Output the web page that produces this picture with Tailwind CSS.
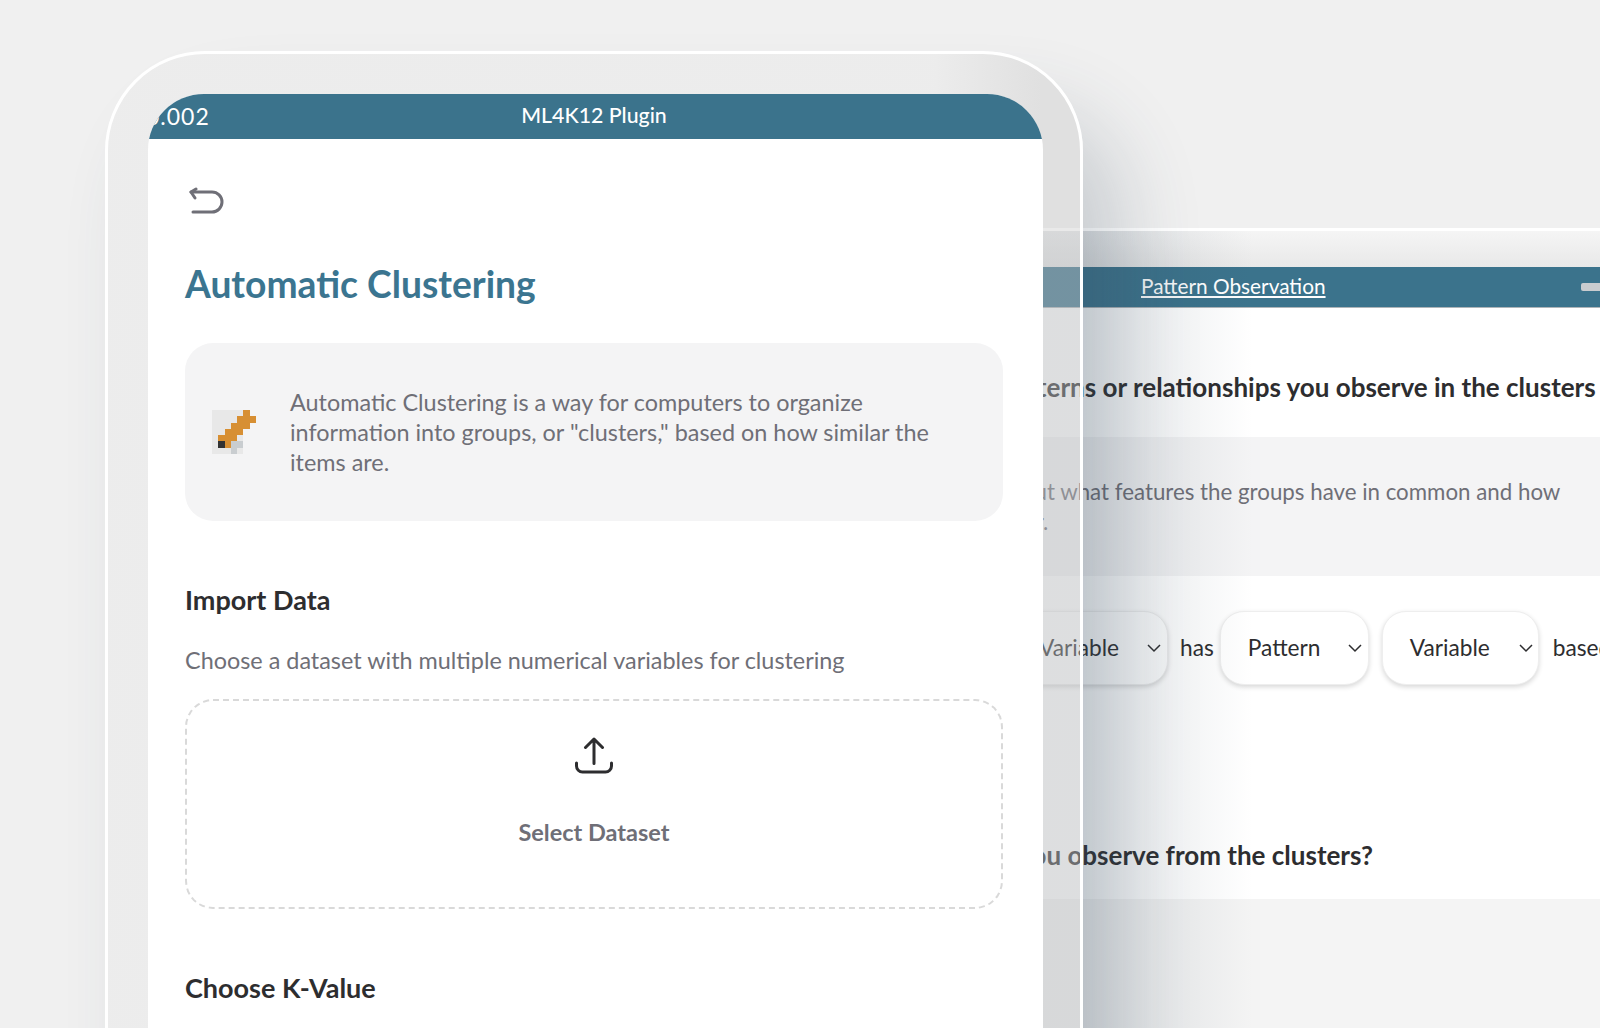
<!DOCTYPE html>
<html>

<head>
  <meta charset="UTF-8">
  <meta name="viewport" content="width=device-width, initial-scale=1.0">
  <script src="https://cdn.jsdelivr.net/npm/@tailwindcss/browser@4"></script>
</head>

<body>
  <div class="relative w-[1600px] h-[1028px] overflow-hidden bg-[#f0f0f0] font-['Lato',sans-serif]">

    <!-- window behind the phone -->
    <div class="absolute left-[800px] top-[228px] w-[860px] h-[800px] border-t-[3px] border-white bg-[linear-gradient(#f5f5f5,#e8e8e8_37px)] pt-[36px]">
      <div class="flex h-[41px] items-center border-b border-[#aeb4b8] bg-[#3b738c] pb-[3px] text-white">
        <span class="ml-[341px] text-[20.8px] underline underline-offset-2">Pattern Observation</span>
        <span class="ml-[255px] mt-[3px] h-[8px] w-[40px] rounded-[2px] bg-[#c9cccf]"></span>
      </div>
      <div class="h-[591px] bg-white">
        <p class="whitespace-nowrap pl-[45px] pt-[64px] text-[26px] font-bold leading-[30px] text-[#2d2d2f]">Describe any patterns or relationships you observe in the clusters</p>
        <div class="mt-[35px] h-[139px] rounded-l-[24px] bg-[#f4f4f5] pl-[138px] pt-[40px] text-[22.3px] leading-[30px] text-[#6f6f77]">
          <p class="whitespace-nowrap">Think about what features the groups have in common and how</p>
          <p class="ml-[5px]">they differ.</p>
        </div>
        <div class="ml-[140px] mt-[35px] flex items-center text-[22.7px] text-[#2d2d2f]">
          <div class="flex h-[74px] w-[228px] items-center justify-between rounded-[24px] border border-[#eeeeee] bg-white pl-[98px] pr-[5px] shadow-[0_2px_5px_rgba(0,0,0,0.16)]">
            <span>Variable</span>
            <svg class="h-4 w-4" viewBox="0 0 16 16" fill="none" stroke="currentColor" stroke-width="1.5"><path d="M2 5l6 6 6-6" /></svg>
          </div>
          <span class="ml-[12px]">has</span>
          <div class="ml-[6px] flex h-[74px] w-[149px] items-center justify-between rounded-[24px] border border-[#eeeeee] bg-white pl-[27px] pr-[5px] shadow-[0_2px_5px_rgba(0,0,0,0.16)]">
            <span>Pattern</span>
            <svg class="h-4 w-4" viewBox="0 0 16 16" fill="none" stroke="currentColor" stroke-width="1.5"><path d="M2 5l6 6 6-6" /></svg>
          </div>
          <div class="ml-[13px] flex h-[74px] w-[157px] items-center justify-between rounded-[24px] border border-[#eeeeee] bg-white pl-[27px] pr-[4px] shadow-[0_2px_5px_rgba(0,0,0,0.16)]">
            <span>Variable</span>
            <svg class="h-4 w-4" viewBox="0 0 16 16" fill="none" stroke="currentColor" stroke-width="1.5"><path d="M2 5l6 6 6-6" /></svg>
          </div>
          <span class="ml-[14px]">based</span>
        </div>
        <p class="whitespace-nowrap pl-[112px] pt-[155px] text-[26px] font-bold leading-[30px] text-[#2d2d2f]">What do you observe from the clusters?</p>
      </div>
      <div class="h-[130px] bg-[#f4f4f4]"></div>
      <!-- soft shade the phone throws on the window -->
      <div class="absolute inset-y-0 left-[243px] w-[40px] bg-[#3c5060]/10"></div>
      <div class="absolute inset-y-0 left-[283px] w-[170px] bg-linear-to-r from-[#3c5060]/15 to-transparent"></div>
    </div>

    <!-- phone -->
    <div class="absolute left-[105px] top-[51px] h-[1100px] w-[978px] rounded-[100px] border-[3px] border-white bg-[linear-gradient(90deg,rgba(215,215,215,0.15)_85%,rgba(200,200,200,0.4)_96%)] pl-[40px] pr-[37px] pt-[40px] shadow-[40px_60px_80px_rgba(50,70,90,0.2)]">
      <div class="h-full overflow-hidden rounded-t-[56px] bg-white">
        <div class="relative flex h-[45px] items-center justify-center bg-[#3b738c] pb-[2px] pr-[3px] text-[21.3px] text-white">
          <span class="absolute left-[-2px] top-[5px] text-[23px] tracking-[1px]">0.002</span>
          <span class="font-medium">ML4K12 Plugin</span>
        </div>
        <div class="pl-[37px] pr-[40px]">
          <svg class="ml-[3px] mt-[48px] h-[28px] w-[36px]" viewBox="0 0 36 28" fill="none" stroke="#6f6f77" stroke-width="3" stroke-linecap="round" stroke-linejoin="round">
            <path d="M3 5h21a8.5 8.5 0 0 1 0 20H5" />
            <path d="M8 2 3 5l4 6" />
          </svg>
          <h1 class="mt-[47px] text-[37.2px] font-bold leading-[44px] text-[#3b7590]">Automatic Clustering</h1>
          <div class="mt-[37px] flex h-[178px] items-center rounded-[28px] bg-[#f4f4f5]">
            <svg class="ml-[27px] h-[44px] w-[44px] shrink-0" viewBox="0 0 7 7" shape-rendering="crispEdges">
              <rect width="5" height="7" fill="#e8e8e8" />
              <rect x="5" width="1" height="1" fill="#d78f33" />
              <rect x="4" y="1" width="3" height="1" fill="#d78f33" />
              <rect x="3" y="2" width="3" height="1" fill="#d78f33" />
              <rect x="2" y="3" width="3" height="1" fill="#d78f33" />
              <rect x="1" y="4" width="3" height="1" fill="#d78f33" />
              <rect x="2" y="5" width="1" height="1" fill="#d78f33" />
              <rect x="1" y="5" width="1" height="1" fill="#333333" />
              <rect x="3" y="5" width="2" height="1" fill="#c9cdd0" />
              <rect x="3" y="6" width="1" height="1" fill="#c9cdd0" />
            </svg>
            <p class="ml-[34px] w-[665px] text-[23.4px] leading-[30px] text-[#6f6f77]">Automatic Clustering is a way for computers to organize information into groups, or "clusters," based on how similar the items are.</p>
          </div>
          <h2 class="mt-[64px] text-[27px] font-bold leading-[30px] text-[#2d2d2f]">Import Data</h2>
          <p class="mt-[30px] text-[23.4px] leading-[30px] text-[#6f6f77]">Choose a dataset with multiple numerical variables for clustering</p>
          <div class="mt-[24px] flex h-[210px] flex-col items-center rounded-[28px] border-2 border-dashed border-[#d9d9d9]">
            <svg class="mt-[36px] h-[37px] w-[38px]" viewBox="0 0 38 37" fill="none" stroke="#2d2d2f" stroke-width="3" stroke-linecap="round" stroke-linejoin="round">
              <path d="M19 26.5V2M10.5 10.5 19 2l8.5 8.5" />
              <path d="M1.5 26v3a6 6 0 0 0 6 6h23a6 6 0 0 0 6-6v-3" />
            </svg>
            <span class="mt-[43px] text-[23.5px] font-bold leading-[30px] text-[#6f6f77]">Select Dataset</span>
          </div>
          <h2 class="mt-[64px] text-[27px] font-bold leading-[30px] text-[#2d2d2f]">Choose K-Value</h2>
        </div>
      </div>
    </div>
  </div>
</body>

</html>
